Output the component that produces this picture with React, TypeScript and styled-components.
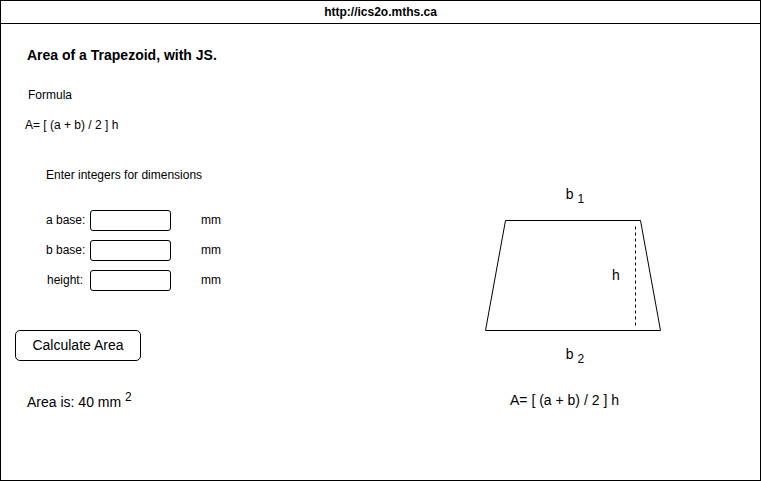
import React, { useState } from "react";
import styled, { createGlobalStyle } from "styled-components";

const GlobalStyle = createGlobalStyle`
  *, *::before, *::after {
    box-sizing: border-box;
  }
  body {
    margin: 0;
    background: #ffffff;
    color: #000000;
    font-family: "Liberation Sans", Arial, Helvetica, sans-serif;
    font-size: 12px;
    line-height: 20px;
  }
`;

const Page = styled.div`
  display: flex;
  flex-direction: column;
  min-height: 100vh;
  border: 1px solid #000000;
`;

const AddressBar = styled.header`
  height: 23px;
  border-bottom: 1px solid #000000;
  font-weight: bold;
  line-height: 22px;
  text-align: center;
`;

const Content = styled.main`
  display: grid;
  grid-template-columns: minmax(0, 1fr) 176px;
  padding: 21px 99px 0 14px;
`;

const Title = styled.h1`
  margin: 0 0 20px;
  padding-left: 12px;
  font-size: 14px;
  line-height: 20px;
`;

const SectionLabel = styled.h2`
  margin: 0 0 10px;
  padding-left: 13px;
  font-size: 12px;
  font-weight: normal;
  line-height: 20px;
`;

const Formula = styled.p`
  margin: 0;
  padding-left: 10px;
`;

const Form = styled.form`
  padding-top: 30px;
`;

const Instruction = styled.p`
  margin: 0 0 25px;
  padding-left: 31px;
`;

const Fields = styled.div`
  display: grid;
  row-gap: 9px;
  padding-left: 31px;
`;

const Field = styled.div`
  display: grid;
  grid-template-columns: 44px 81px auto;
  justify-content: start;
  align-items: start;
`;

const FieldLabel = styled.label<{ $indent?: boolean }>`
  padding-left: ${({ $indent }) => ($indent ? "1px" : "0")};
  white-space: nowrap;
`;

const NumberInput = styled.input`
  width: 100%;
  height: 21px;
  padding: 0 6px;
  border: 1px solid #000000;
  border-radius: 3px;
  background: #ffffff;
  color: inherit;
  font: inherit;
`;

const Unit = styled.span`
  padding-left: 30px;
`;

const CalculateButton = styled.button`
  height: 31px;
  min-width: 126px;
  margin-top: 39px;
  padding: 0 16px 1px;
  border: 1px solid #000000;
  border-radius: 5px;
  background: #ffffff;
  color: inherit;
  font-family: inherit;
  font-size: 14px;
  line-height: 20px;
  cursor: pointer;
`;

const Result = styled.output`
  display: block;
  margin-top: 31px;
  padding-left: 12px;
  font-size: 14px;
`;

const Superscript = styled.sup`
  font-size: 12px;
  line-height: 0;
  vertical-align: 6px;
`;

const Subscript = styled.sub`
  font-size: 12px;
  line-height: 0;
  vertical-align: -4px;
`;

const Figure = styled.figure`
  margin: 0;
  padding-top: 139px;
  font-size: 14px;
`;

const BaseLabel = styled.div`
  padding-left: 4px;
  text-align: center;
`;

const Drawing = styled.svg`
  display: block;
  width: 176px;
  height: 111px;
  margin: 16px 0 13px;
  font-size: 14px;
`;

const Caption = styled.figcaption`
  margin-top: 26px;
  padding-left: 25px;
`;

const FIELDS = [
  { id: "a", label: "a base:" },
  { id: "b", label: "b base:" },
  { id: "h", label: "height:", indent: true },
];

const FORMULA = "A= [ (a + b) / 2 ] h";

export default function App() {
  const [values, setValues] = useState<Record<string, string>>({ a: "", b: "", h: "" });
  const [area, setArea] = useState(40);

  const calculate = (event: React.FormEvent) => {
    event.preventDefault();
    const a = parseInt(values.a, 10);
    const b = parseInt(values.b, 10);
    const h = parseInt(values.h, 10);
    const next = ((a + b) / 2) * h;
    if (!Number.isNaN(next)) setArea(next);
  };

  return (
    <>
      <GlobalStyle />
      <Page>
        <AddressBar>http://ics2o.mths.ca</AddressBar>
        <Content>
          <section>
            <Title>Area of a Trapezoid, with JS.</Title>
            <SectionLabel>Formula</SectionLabel>
            <Formula>{FORMULA}</Formula>
            <Form onSubmit={calculate}>
              <Instruction>Enter integers for dimensions</Instruction>
              <Fields>
                {FIELDS.map(({ id, label, indent }) => (
                  <Field key={id}>
                    <FieldLabel htmlFor={id} $indent={indent}>{label}</FieldLabel>
                    <NumberInput
                      id={id}
                      type="text"
                      inputMode="numeric"
                      value={values[id]}
                      onChange={(e) => setValues({ ...values, [id]: e.target.value })}
                    />
                    <Unit>mm</Unit>
                  </Field>
                ))}
              </Fields>
              <CalculateButton type="submit">Calculate Area</CalculateButton>
              <Result htmlFor="a b h">
                Area is: {area} mm <Superscript>2</Superscript>
              </Result>
            </Form>
          </section>
          <Figure>
            <BaseLabel>b <Subscript>1</Subscript></BaseLabel>
            <Drawing viewBox="0 0 176 111" role="img" aria-label="Trapezoid with height h">
              <path d="M0.5 110.5 L20.5 0.5 H155.5 L175.5 110.5 Z" fill="none" stroke="#000000" />
              <path d="M150.5 105.5 V6" fill="none" stroke="#000000" strokeDasharray="3 3" />
              <text x="127" y="60">h</text>
            </Drawing>
            <BaseLabel>b <Subscript>2</Subscript></BaseLabel>
            <Caption>{FORMULA}</Caption>
          </Figure>
        </Content>
      </Page>
    </>
  );
}
